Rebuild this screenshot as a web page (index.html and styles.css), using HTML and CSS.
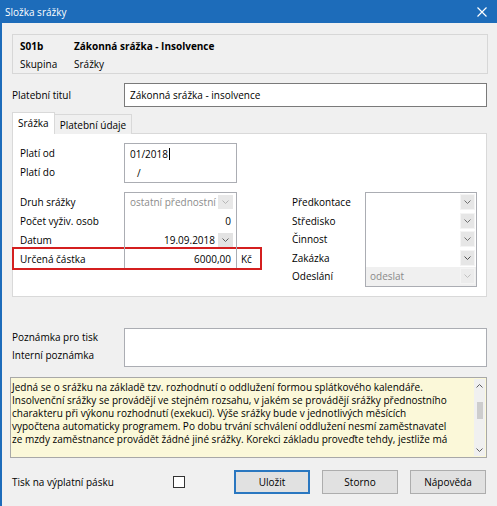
FILE: index.html
```html
<!DOCTYPE html>
<html lang="cs">
<head>
<meta charset="utf-8">
<title>Složka srážky</title>
<link rel="stylesheet" href="styles.css">
</head>
<body>
<div class="window">
  <div class="titlebar">
    <span class="title">Složka srážky</span>
    <svg class="close" width="10" height="10" viewBox="0 0 10 10"><path d="M0.5 0.5 L9.5 9.5 M9.5 0.5 L0.5 9.5" stroke="#fff" stroke-width="1.2" fill="none"/></svg>
  </div>
  <div class="content">
    <div class="header">
      <div class="hrow"><span class="hc1 bold">S01b</span><span class="bold">Zákonná srážka - Insolvence</span></div>
      <div class="hrow"><span class="hc1">Skupina</span><span>Srážky</span></div>
    </div>

    <div class="title-row">
      <span class="lbl">Platební titul</span>
      <div class="textbox">Zákonná srážka - insolvence</div>
    </div>

    <div class="tabs">
      <div class="tab active">Srážka</div>
      <div class="tab">Platební údaje</div>
    </div>

    <div class="panel">
      <div class="dates">
        <div class="dlabels">
          <div>Platí od</div>
          <div>Platí do</div>
        </div>
        <div class="datebox">
          <div class="dline">01/2018<span class="caret"></span></div>
          <div class="dline slash">/</div>
        </div>
      </div>

      <div class="lower">
        <div class="lcol">
          <div class="frow first">
            <span class="fl">Druh srážky</span>
            <div class="fv"><span class="muted">ostatní přednostní</span><span class="dd disabled"><svg width="7" height="4" viewBox="0 0 7 4"><path d="M0.5 0.5 L3.5 3.5 L6.5 0.5" fill="none" stroke="#b5b5b5"/></svg></span></div>
          </div>
          <div class="frow">
            <span class="fl">Počet vyživ. osob</span>
            <div class="fv num">0</div>
          </div>
          <div class="frow">
            <span class="fl">Datum</span>
            <div class="fv"><span class="grow right">19.09.2018</span><span class="dd"><svg width="7" height="4" viewBox="0 0 7 4"><path d="M0.5 0.5 L3.5 3.5 L6.5 0.5" fill="none" stroke="#606060"/></svg></span></div>
          </div>
          <div class="frow red">
            <span class="fl">Určená částka</span>
            <div class="fv num">6000,00</div>
            <span class="unit">Kč</span>
          </div>
        </div>

        <div class="rcol">
          <div class="rlabels">
            <div>Předkontace</div>
            <div>Středisko</div>
            <div>Činnost</div>
            <div>Zakázka</div>
            <div>Odeslání</div>
          </div>
          <div class="rbox">
            <div class="rrow"><span class="grow"></span><span class="dd"><svg width="7" height="4" viewBox="0 0 7 4"><path d="M0.5 0.5 L3.5 3.5 L6.5 0.5" fill="none" stroke="#707070"/></svg></span></div>
            <div class="rrow"><span class="grow"></span><span class="dd"><svg width="7" height="4" viewBox="0 0 7 4"><path d="M0.5 0.5 L3.5 3.5 L6.5 0.5" fill="none" stroke="#707070"/></svg></span></div>
            <div class="rrow"><span class="grow"></span><span class="dd"><svg width="7" height="4" viewBox="0 0 7 4"><path d="M0.5 0.5 L3.5 3.5 L6.5 0.5" fill="none" stroke="#707070"/></svg></span></div>
            <div class="rrow"><span class="grow"></span><span class="dd"><svg width="7" height="4" viewBox="0 0 7 4"><path d="M0.5 0.5 L3.5 3.5 L6.5 0.5" fill="none" stroke="#505050"/></svg></span></div>
            <div class="rrow disabled"><span class="grow">odeslat</span><span class="dd disabled"><svg width="7" height="4" viewBox="0 0 7 4"><path d="M0.5 0.5 L3.5 3.5 L6.5 0.5" fill="none" stroke="#c0c0c0"/></svg></span></div>
          </div>
        </div>
      </div>
    </div>

    <div class="notes">
      <div class="nlabels">
        <div>Poznámka pro tisk</div>
        <div>Interní poznámka</div>
      </div>
      <div class="notebox"></div>
    </div>

    <div class="info">
      <div class="info-text">Jedná se o srážku na základě tzv. rozhodnutí o oddlužení formou splátkového kalendáře.<br>Insolvenční srážky se provádějí ve stejném rozsahu, v jakém se provádějí srážky přednostního<br>charakteru při výkonu rozhodnutí (exekuci). Výše srážky bude v jednotlivých měsících<br>vypočtena automaticky programem. Po dobu trvání schválení oddlužení nesmí zaměstnavatel<br>ze mzdy zaměstnance provádět žádné jiné srážky. Korekci základu proveďte tehdy, jestliže má</div>
      <div class="scroll">
        <svg class="sarrow" width="7" height="4" viewBox="0 0 7 4"><path d="M0.5 3.5 L3.5 0.5 L6.5 3.5" fill="none" stroke="#606060"/></svg>
        <div class="thumb"></div>
        <div class="sgrow"></div>
        <svg class="sarrow" width="7" height="4" viewBox="0 0 7 4"><path d="M0.5 0.5 L3.5 3.5 L6.5 0.5" fill="none" stroke="#606060"/></svg>
      </div>
    </div>

    <div class="footer">
      <span class="flabel">Tisk na výplatní pásku</span>
      <span class="checkbox"></span>
      <div class="buttons">
        <div class="btn default">Uložit</div>
        <div class="btn">Storno</div>
        <div class="btn">Nápověda</div>
      </div>
    </div>
  </div>
</div>
</body>
</html>
```

FILE: styles.css
```css
* { box-sizing: border-box; }
html, body { margin: 0; padding: 0; }
body {
  font-family: "Open Sans", "Noto Sans", sans-serif;
  font-size: 10px;
  color: #000;
  background: #f0f0f0;
}
.window {
  width: 497px;
  height: 506px;
  background: #f0f0f0;
  border-left: 2px solid #1d6cba;
  overflow: hidden;
}
.titlebar {
  height: 23px;
  background: #1d6cba;
  color: #fff;
  display: flex;
  align-items: center;
  justify-content: space-between;
  padding: 0 10px 0 3px;
}
.title { font-size: 10px; }
.content { padding: 0 10px; }

.header {
  margin-top: 11px;
  margin-right: -1px;
  height: 40px;
  border: 1px solid #d7d7d7;
  padding: 2px 7px 0;
}
.hrow { display: flex; align-items: center; height: 18px; }
.hc1 { width: 54px; }
.bold { font-weight: 700; }

.title-row { margin-top: 9px; display: flex; align-items: center; height: 24px; }
.lbl { width: 112px; }
.textbox {
  flex: 1;
  height: 24px;
  border: 1px solid #7a7a7a;
  background: #fff;
  padding-left: 5px;
  display: flex;
  align-items: center;
}

.tabs {
  margin-top: 5px;
  height: 22px;
  display: flex;
  align-items: flex-end;
  position: relative;
  z-index: 1;
  margin-bottom: -1px;
}
.tab {
  height: 20px;
  padding: 0 5px;
  border: 1px solid #d9d9d9;
  border-bottom: none;
  background: #f0f0f0;
  display: flex;
  align-items: center;
}
.tab + .tab { margin-left: -1px; }
.tab.active { height: 22px; background: #fff; padding-bottom: 2px; }

.panel {
  background: #fff;
  border: 1px solid #d9d9d9;
  padding: 9px 9px 9px 7px;
}
.dates { display: flex; }
.dlabels { width: 104px; padding-top: 1px; }
.dlabels div { height: 19px; line-height: 19px; }
.datebox {
  width: 113px;
  height: 40px;
  border: 1px solid #abadb3;
  padding-left: 5px;
}
.dline { height: 19px; display: flex; align-items: center; }
.slash { padding-left: 7px; }
.caret { display: inline-block; width: 1px; height: 12px; background: #000; margin-left: 1px; }

.lower { display: flex; margin-top: 9px; }
.lcol { width: 242px; }
.frow { display: flex; align-items: center; height: 19px; }
.fl { width: 104px; }
.fv {
  width: 113px;
  height: 100%;
  border-left: 1px solid #abadb3;
  border-right: 1px solid #abadb3;
  display: flex;
  align-items: center;
  padding: 0 3px 0 5px;
}
.frow.first .fv { border-top: 1px solid #abadb3; }
.fv.num { justify-content: flex-end; padding-right: 5px; }
.muted { color: #8c8c8c; flex: 1; }
.grow { flex: 1; }
.right { text-align: right; padding-right: 3px; }
.frow.red {
  height: 23px;
  width: 250px;
  margin-left: -8px;
  margin-top: -2px;
  padding-left: 6px;
  border: 2px solid #d41f1f;
}
.unit { padding-left: 4px; }
.dd {
  width: 15px;
  height: 14px;
  background: #e3e3e3;
  display: flex;
  align-items: center;
  justify-content: center;
  flex: none;
}
.dd.disabled { background: #e8e8e8; }

.rcol { display: flex; margin-left: 30px; }
.rlabels { width: 73px; padding-top: 1px; }
.rlabels div { height: 18.5px; line-height: 18.5px; }
.rbox { width: 112px; border: 1px solid #abadb3; align-self: flex-start; }
.rrow { height: 18.5px; display: flex; align-items: center; padding: 0 1px 0 4px; }
.rrow .dd { height: 16px; background: #e6e6e6; border: 1px solid #f4f4f4; }
.rrow.disabled { background: #f0f0f0; color: #8a8a8a; }
.rrow.disabled .dd { background: #ececec; }

.notes { display: flex; margin-top: 31px; }
.nlabels { width: 112px; }
.nlabels div { height: 18px; line-height: 18px; }
.notebox { flex: 1; height: 39px; border: 1px solid #abadb3; background: #fff; }

.info {
  margin-top: 10px;
  margin-left: -2px;
  height: 81px;
  border: 1px solid #a8a8a8;
  background: #fbf8d9;
  display: flex;
}
.info-text {
  flex: 1;
  padding: 3px 0 0 1px;
  line-height: 13px;
  overflow: hidden;
  white-space: nowrap;
}
.scroll {
  width: 11px;
  margin: 1px 1px 1px 0;
  background: #f0f0f0;
  display: flex;
  flex-direction: column;
  align-items: center;
  padding: 5px 0 4px;
}
.thumb { width: 6px; height: 17px; background: #cdcdcd; margin-top: 14px; }
.sgrow { flex: 1; }

.footer { display: flex; align-items: center; height: 24px; margin-top: 12px; }
.flabel { width: 161px; }
.checkbox { width: 12px; height: 12px; border: 1px solid #333; background: #fff; }
.buttons { margin-left: auto; margin-right: 1px; display: flex; gap: 12px; }
.btn {
  width: 76px;
  height: 24px;
  border: 1px solid #adadad;
  background: #e1e1e1;
  display: flex;
  align-items: center;
  justify-content: center;
}
.btn.default { border: 2px solid #2a77c0; }
```
